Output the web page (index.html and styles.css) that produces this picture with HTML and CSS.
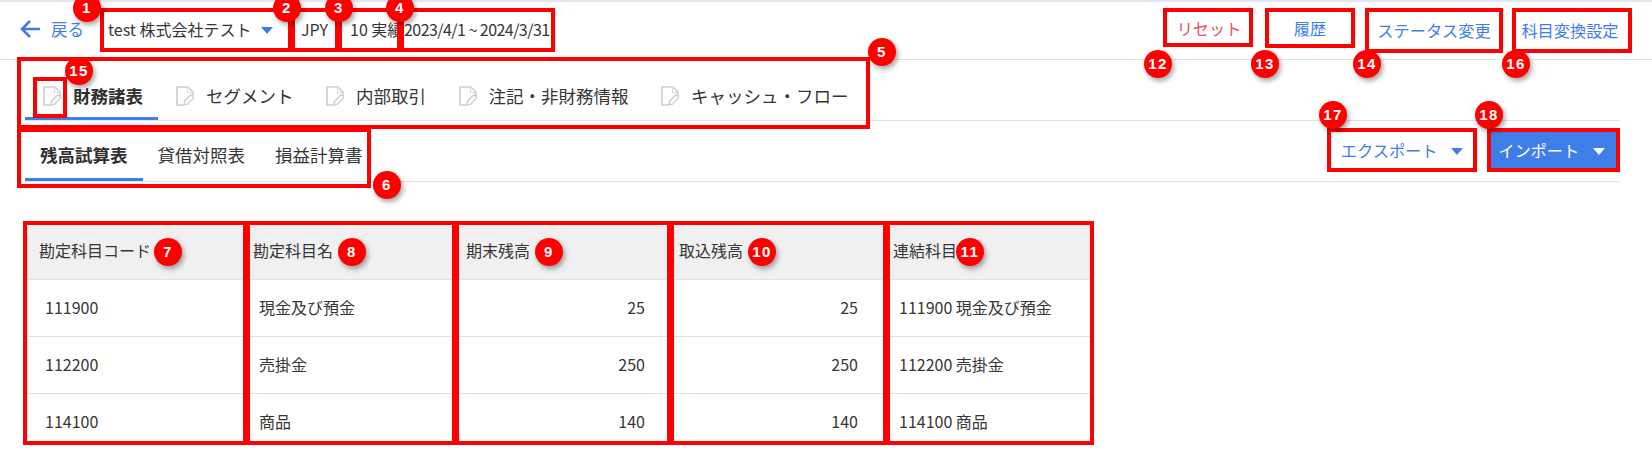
FILE: index.html
```html
<!DOCTYPE html>
<html lang="ja">
<head>
  <meta charset="UTF-8" />
  <title>財務諸表 インポート</title>
  <link rel="stylesheet" href="styles.css">
</head>
<body>
  <svg class="defs" width="0" height="0">
    <symbol id="doc" viewBox="0 0 18 20">
      <path d="M8 19H1V1H12L17 6V10" fill="none" stroke="#cfcfcf" stroke-width="1.7"/>
      <path d="M11.5 1V6.5H17" fill="none" stroke="#dcdcdc" stroke-width="1.1"/>
      <path d="M8 18.8l.6-3.6 6.4-6.4 3 3-6.4 6.4z" fill="none" stroke="#cfcfcf" stroke-width="1.4"/>
    </symbol>
  </svg>

  <div class="page">
    <header class="topbar">
      <a class="back">
        <svg class="back-icon" width="20" height="18" viewBox="0 0 20 18"><path d="M20 9H2.5M10 1L2 9l8 8" fill="none" stroke="#3f7ee8" stroke-width="2.6"/></svg>
        戻る
      </a>
      <div class="company">test 株式会社テスト <span class="caret"></span></div>
      <div class="currency">JPY</div>
      <div class="scenario">10 実績</div>
      <div class="period">2023/4/1 ~ 2024/3/31</div>
      <div class="actions">
        <button class="btn btn-reset">リセット</button>
        <button class="btn btn-history">履歴</button>
        <button class="btn btn-status">ステータス変更</button>
        <button class="btn btn-mapping">科目変換設定</button>
      </div>
    </header>

    <nav class="tabs">
      <a class="tab active"><svg class="doc"><use href="#doc"/></svg>財務諸表</a>
      <a class="tab"><svg class="doc"><use href="#doc"/></svg>セグメント</a>
      <a class="tab"><svg class="doc"><use href="#doc"/></svg>内部取引</a>
      <a class="tab"><svg class="doc"><use href="#doc"/></svg>注記・非財務情報</a>
      <a class="tab"><svg class="doc"><use href="#doc"/></svg>キャッシュ・フロー</a>
    </nav>

    <div class="subbar">
      <nav class="subtabs">
        <a class="subtab active">残高試算表</a>
        <a class="subtab">貸借対照表</a>
        <a class="subtab">損益計算書</a>
      </nav>
      <div class="subactions">
        <button class="btn btn-export">エクスポート <span class="caret"></span></button>
        <button class="btn btn-import">インポート <span class="caret"></span></button>
      </div>
    </div>

    <table class="grid">
      <thead>
        <tr>
          <th class="col-code">勘定科目コード</th>
          <th class="col-name">勘定科目名</th>
          <th class="col-num">期末残高</th>
          <th class="col-num2">取込残高</th>
          <th class="col-link">連結科目</th>
        </tr>
      </thead>
      <tbody>
        <tr><td>111900</td><td class="name">現金及び預金</td><td class="num">25</td><td class="num num2">25</td><td class="link">111900 現金及び預金</td></tr>
        <tr><td>112200</td><td class="name">売掛金</td><td class="num">250</td><td class="num num2">250</td><td class="link">112200 売掛金</td></tr>
        <tr><td>114100</td><td class="name">商品</td><td class="num">140</td><td class="num num2">140</td><td class="link">114100 商品</td></tr>
      </tbody>
    </table>

    <!-- annotation overlay -->
    <div class="box box-1"></div>
    <div class="box box-2"></div>
    <div class="box box-3"></div>
    <div class="box box-4"></div>
    <div class="box box-5"></div>
    <div class="box box-6"></div>
    <div class="box box-7"></div>
    <div class="box box-8"></div>
    <div class="box box-9"></div>
    <div class="box box-10"></div>
    <div class="box box-11"></div>
    <div class="box box-12"></div>
    <div class="box box-13"></div>
    <div class="box box-14"></div>
    <div class="box box-15"></div>
    <div class="box box-16"></div>
    <div class="box box-17"></div>
    <div class="box box-18"></div>

    <span class="badge badge-1">1</span>
    <span class="badge badge-2">2</span>
    <span class="badge badge-3">3</span>
    <span class="badge badge-4">4</span>
    <span class="badge badge-5">5</span>
    <span class="badge badge-6">6</span>
    <span class="badge badge-7">7</span>
    <span class="badge badge-8">8</span>
    <span class="badge badge-9">9</span>
    <span class="badge badge-10">10</span>
    <span class="badge badge-11">11</span>
    <span class="badge badge-12">12</span>
    <span class="badge badge-13">13</span>
    <span class="badge badge-14">14</span>
    <span class="badge badge-15">15</span>
    <span class="badge badge-16">16</span>
    <span class="badge badge-17">17</span>
    <span class="badge badge-18">18</span>
  </div>
</body>
</html>
```

FILE: styles.css
```css
:root {
  --blue: #3f7ee8;
  --red: #e8505b;
  --line: #e2e2e2;
  --text: #363636;
  --mark: #ff0000;
}

* {
  box-sizing: border-box;
}

html, body {
  margin: 0;
  height: 100%;
  overflow: hidden;
}

body {
  background: #fff;
  color: var(--text);
  font-family: "Noto Sans CJK JP", "Noto Sans", sans-serif;
  font-size: 16px;
}

.defs {
  position: absolute;
}

.page {
  position: relative;
  height: 450px;
  border-top: 2px solid #e1e7f0;
}

/* top bar */
.topbar {
  display: flex;
  align-items: center;
  height: 58px;
  padding: 0 20px;
  border-bottom: 1px solid var(--line);
}

.back, .company, .currency, .scenario, .period {
  padding-bottom: 4px;
}

.back {
  display: flex;
  align-items: center;
  gap: 11px;
  width: 80px;
  color: var(--blue);
  font-size: 16.5px;
}

.company {
  width: 191px;
  padding-left: 8px;
  white-space: nowrap;
}

.company .caret {
  margin-left: 6px;
}

.currency {
  width: 47px;
  text-align: center;
}

.scenario {
  width: 62px;
  padding-left: 12px;
  white-space: nowrap;
}

.period {
  padding-left: 4px;
  white-space: nowrap;
  letter-spacing: -0.55px;
}

.actions {
  display: flex;
  align-items: flex-start;
  height: 40px;
  margin-left: auto;
}

.btn {
  height: 40px;
  padding: 0 0 2px;
  border: 1px solid var(--blue);
  border-radius: 2px;
  background: #fff;
  color: var(--blue);
  font-family: inherit;
  font-size: 16.2px;
  white-space: nowrap;
}

.btn-reset {
  width: 88px;
  height: 36px;
  padding-left: 2px;
  border-color: var(--red);
  color: var(--red);
}

.btn-history {
  width: 88px;
  height: 36px;
  margin-left: 14px;
}

.btn-status {
  width: 138px;
  margin-left: 11px;
}

.btn-mapping {
  width: 120px;
  margin-left: 9px;
  padding-right: 4px;
}

.btn-export {
  width: 150px;
  height: 42px;
}

.btn-import {
  width: 133px;
  height: 42px;
  padding-right: 4px;
  background: var(--blue);
  color: #fff;
}

.caret {
  display: inline-block;
  width: 0;
  height: 0;
  margin-left: 10px;
  border-left: 6px solid transparent;
  border-right: 6px solid transparent;
  border-top: 7px solid var(--blue);
  vertical-align: 2px;
}

.btn-import .caret {
  border-top-color: #fff;
}

/* tabs */
.tabs {
  display: flex;
  height: 61px;
  margin: 0 32px 0 25px;
  border-bottom: 1px solid var(--line);
  align-items: flex-end;
}

.tab {
  display: flex;
  align-items: center;
  height: 58px;
  padding: 12px 14.5px 0 18px;
  font-size: 17.5px;
  border-bottom: 3px solid transparent;
  white-space: nowrap;
}

.tab.active {
  font-weight: 700;
  color: #2f2f2f;
  padding-right: 15px;
  border-bottom-color: var(--blue);
}

.doc {
  width: 18px;
  height: 20px;
  margin-right: 12px;
}

.subbar {
  display: flex;
  height: 61px;
  margin: 0 32px 0 25px;
  border-bottom: 1px solid var(--line);
  align-items: flex-end;
  justify-content: space-between;
}

.subtabs {
  display: flex;
}

.subtab {
  display: block;
  height: 56px;
  padding: 6px 15px 0;
  line-height: 47px;
  font-size: 17.5px;
  border-bottom: 3px solid transparent;
}

.subtab.active {
  font-weight: 700;
  color: #2f2f2f;
  border-bottom-color: var(--blue);
}

.subactions {
  display: flex;
  gap: 10px;
  align-self: flex-start;
  margin-top: 9px;
}

/* table */
.grid {
  width: 1069px;
  margin: 42px 0 0 25px;
  border-collapse: collapse;
  table-layout: fixed;
}

.grid th {
  height: 55px;
  padding: 0 0 2px 14px;
  background: #f0f0f0;
  font-weight: 400;
  text-align: left;
  border-bottom: 1px solid var(--line);
}

.grid td {
  height: 57px;
  padding: 0 21px 2px 20px;
  border-bottom: 1px solid var(--line);
  white-space: nowrap;
}

.grid td.name, .grid td.link {
  padding-left: 13px;
}

.grid td.num {
  padding-right: 25px;
  text-align: right;
}

.grid td.num2 {
  padding-right: 28px;
}

.grid th.col-code { width: 221px; }
.grid th.col-name { width: 209px; padding-left: 7px; }
.grid th.col-num { width: 215px; padding-left: 11px; }
.grid th.col-num2 { width: 216px; padding-left: 9px; }
.grid th.col-link { width: 208px; padding-left: 7px; }

/* annotation marks */
.box {
  position: absolute;
  border: 4px solid var(--mark);
}

.box-1 { left: 100px; top: 6px; width: 192px; height: 44px; }
.box-2 { left: 291px; top: 6px; width: 48px; height: 44px; }
.box-3 { left: 338px; top: 6px; width: 63px; height: 44px; }
.box-4 { left: 400px; top: 6px; width: 155px; height: 44px; }
.box-5 { left: 17px; top: 55px; width: 853px; height: 72px; }
.box-6 { left: 17px; top: 126px; width: 354px; height: 60px; }
.box-7 { left: 23px; top: 219px; width: 224px; height: 224px; }
.box-8 { left: 246px; top: 219px; width: 210px; height: 224px; }
.box-9 { left: 455px; top: 219px; width: 216px; height: 224px; }
.box-10 { left: 670px; top: 219px; width: 217px; height: 224px; }
.box-11 { left: 886px; top: 219px; width: 208px; height: 224px; }
.box-12 { left: 1163px; top: 6px; width: 90px; height: 39px; }
.box-13 { left: 1265px; top: 6px; width: 90px; height: 40px; }
.box-14 { left: 1365px; top: 6px; width: 138px; height: 45px; }
.box-15 { left: 33px; top: 75px; width: 34px; height: 41px; }
.box-16 { left: 1512px; top: 6px; width: 120px; height: 45px; }
.box-17 { left: 1327px; top: 126px; width: 150px; height: 44px; }
.box-18 { left: 1487px; top: 126px; width: 133px; height: 44px; }

.badge {
  position: absolute;
  width: 28px;
  height: 28px;
  border-radius: 50%;
  background: var(--mark);
  color: #fff;
  font-family: "Liberation Sans", sans-serif;
  font-size: 15px;
  font-weight: 700;
  line-height: 28px;
  letter-spacing: 1.5px;
  text-align: center;
  box-shadow: 2px 3px 5px rgba(0, 0, 0, 0.35);
}

.badge-1 { left: 73px; top: -8px; }
.badge-2 { left: 273px; top: -8px; }
.badge-3 { left: 325px; top: -8px; }
.badge-4 { left: 386px; top: -8px; }
.badge-5 { left: 868px; top: 36px; }
.badge-6 { left: 373px; top: 169px; }
.badge-7 { left: 154px; top: 236px; }
.badge-8 { left: 338px; top: 236px; }
.badge-9 { left: 535px; top: 236px; }
.badge-10 { left: 748px; top: 236px; }
.badge-11 { left: 956px; top: 236px; }
.badge-12 { left: 1144px; top: 48px; }
.badge-13 { left: 1251px; top: 48px; }
.badge-14 { left: 1353px; top: 48px; }
.badge-15 { left: 65px; top: 55px; }
.badge-16 { left: 1502px; top: 48px; }
.badge-17 { left: 1319px; top: 99px; }
.badge-18 { left: 1475px; top: 99px; }
```
